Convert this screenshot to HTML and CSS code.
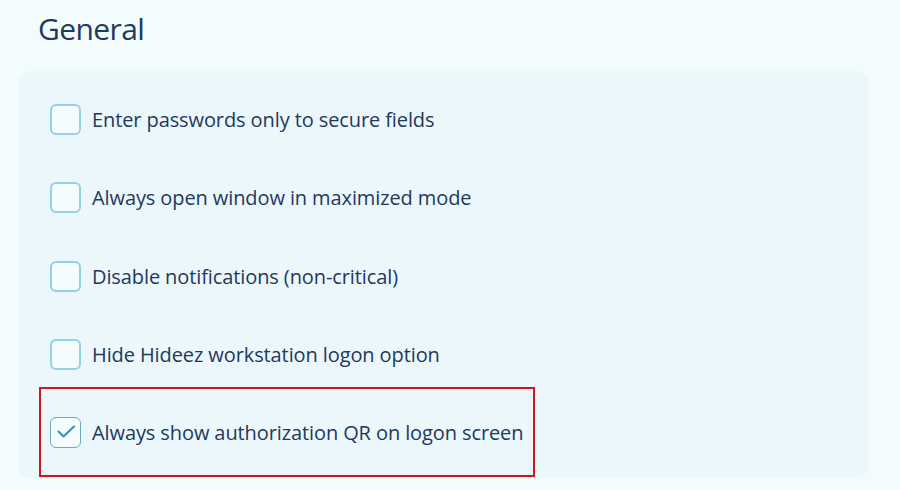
FILE: index.html
```html
<!DOCTYPE html>
<html>
<head>
<meta charset="utf-8">
<link rel="stylesheet" href="styles.css">
</head>
<body>
<div class="page">
  <h1 class="title">General</h1>
  <div class="card">
    <label class="row"><span class="box"></span><span class="text">Enter passwords only to secure fields</span></label>
    <label class="row"><span class="box"></span><span class="text">Always open window in maximized mode</span></label>
    <label class="row"><span class="box"></span><span class="text">Disable notifications (non-critical)</span></label>
    <label class="row"><span class="box"></span><span class="text">Hide Hideez workstation logon option</span></label>
    <div class="highlight">
      <label class="row"><span class="box checked"><svg width="30" height="30" viewBox="0 0 30 30"><path d="M7.5 14.5 L12.5 19.5 L23 9.5" fill="none" stroke="#3a8db0" stroke-width="2" stroke-linecap="round" stroke-linejoin="round"/></svg></span><span class="text">Always show authorization QR on logon screen</span></label>
    </div>
  </div>
</div>
</body>
</html>
```
FILE: styles.css
```css
html, body {
  margin: 0;
  padding: 0;
  background: #f2fcfd;
}
body {
  width: 900px;
  height: 490px;
  overflow: hidden;
  font-family: "Open Sans", "Noto Sans", sans-serif;
  color: #23395b;
}
.page {
  padding: 8px 32px 0 19px;
}
.title {
  margin: 0 0 0 19px;
  font-size: 30px;
  font-weight: 400;
  letter-spacing: -0.6px;
  line-height: 42px;
  height: 63px;
  color: #243a5c;
}
.card {
  background: #ebf7fb;
  border-radius: 10px;
  padding: 9px 0 0 20px;
  height: 407px;
  box-sizing: border-box;
}
.row {
  display: flex;
  align-items: center;
  height: 78.5px;
  padding-left: 11px;
  gap: 11px;
}
.box {
  width: 31px;
  height: 31px;
  box-sizing: border-box;
  border: 2px solid #92d1e6;
  border-radius: 6px;
  background: #f4fcfe;
  flex: none;
  display: flex;
  align-items: center;
  justify-content: center;
}
.box svg {
  flex: none;
}
.box.checked {
  border: 1.5px solid #6aa9c2;
}
.text {
  font-size: 20px;
  letter-spacing: -0.1px;
}
.highlight {
  width: 496px;
  height: 90px;
  box-sizing: border-box;
  border: 2px solid #d0161f;
  margin-top: -7px;
  display: flex;
  align-items: center;
}
.highlight .row {
  padding-left: 9px;
}
```
